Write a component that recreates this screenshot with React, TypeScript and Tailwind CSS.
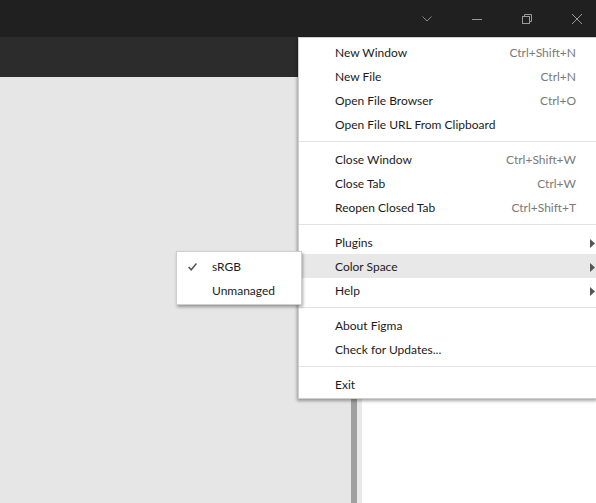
type Item = { label: string; shortcut?: string; sub?: boolean; active?: boolean }

const groups: Item[][] = [
    [
        { label: 'New Window', shortcut: 'Ctrl+Shift+N' },
        { label: 'New File', shortcut: 'Ctrl+N' },
        { label: 'Open File Browser', shortcut: 'Ctrl+O' },
        { label: 'Open File URL From Clipboard' },
    ],
    [
        { label: 'Close Window', shortcut: 'Ctrl+Shift+W' },
        { label: 'Close Tab', shortcut: 'Ctrl+W' },
        { label: 'Reopen Closed Tab', shortcut: 'Ctrl+Shift+T' },
    ],
    [
        { label: 'Plugins', sub: true },
        { label: 'Color Space', sub: true, active: true },
        { label: 'Help', sub: true },
    ],
    [
        { label: 'About Figma' },
        { label: 'Check for Updates...' },
    ],
    [{ label: 'Exit' }],
]

function Arrow() {
    return (
        <svg width="5" height="9" viewBox="0 0 5 9">
            <path d="M0 0 L5 4.5 L0 9 Z" fill="#555" />
        </svg>
    )
}

function MenuRow({ item }: { item: Item }) {
    return (
        <div className={`flex h-[24px] items-center pl-[36px] pr-[2px] pt-[2px] ${item.active ? 'bg-[#e8e8e8]' : ''}`}>
            <span className="flex-1 text-[#1b1b1b]">{item.label}</span>
            {item.shortcut && <span className="text-[#7a7a7a]">{item.shortcut}</span>}
            <span className="flex w-[19px] justify-end">{item.sub && <Arrow />}</span>
        </div>
    )
}

export default function App() {
    return (
        <div className="relative h-[503px] w-[596px] overflow-hidden bg-[#e6e6e6] font-['Lato',sans-serif] text-[12px]">
            {/* title bar */}
            <div className="flex h-[37px] items-center justify-end bg-[#202020] pr-[14px]">
                <div className="flex items-center gap-[40px]">
                    <svg width="10" height="6" viewBox="0 0 10 6">
                        <path d="M0.5 0.5 L5 5 L9.5 0.5" stroke="#8a8a8a" strokeWidth="1" fill="none" />
                    </svg>
                    <svg width="10" height="10" viewBox="0 0 10 10">
                        <path d="M0 5.5 H10" stroke="#9a9a9a" strokeWidth="1" />
                    </svg>
                    <svg width="10" height="10" viewBox="0 0 10 10">
                        <rect x="0.5" y="2.5" width="7" height="7" stroke="#9a9a9a" fill="none" />
                        <path d="M2.5 2.5 V0.5 H9.5 V7.5 H7.5" stroke="#9a9a9a" fill="none" />
                    </svg>
                    <svg width="10" height="10" viewBox="0 0 10 10">
                        <path d="M0 0 L10 10 M10 0 L0 10" stroke="#9a9a9a" strokeWidth="1" />
                    </svg>
                </div>
            </div>
            {/* toolbar */}
            <div className="h-[40px] bg-[#2c2c2c]" />
            {/* workspace */}
            <div className="flex h-[426px]">
                <div className="w-[351px] bg-[#e6e6e6]" />
                <div className="w-[6px] bg-[#a0a0a0]" />
                <div className="w-[5px] bg-[#e9e9e9]" />
                <div className="flex-1 bg-white" />
            </div>

            {/* main menu */}
            <div className="absolute left-[298px] top-[37px] w-[300px] border border-[#cfcfcf] bg-white py-[2px] shadow-[-1px_2px_3px_rgba(0,0,0,0.35)]">
                {groups.map((g, i) => (
                    <div key={i}>
                        {i > 0 && <div className="my-[5px] h-px bg-[#e3e3e3]" />}
                        {g.map((item) => (
                            <MenuRow key={item.label} item={item} />
                        ))}
                    </div>
                ))}
            </div>

            {/* color space submenu */}
            <div className="absolute left-[176px] top-[251px] w-[126px] border border-[#cfcfcf] bg-white py-[2px] shadow-[1px_2px_3px_rgba(0,0,0,0.35)]">
                <div className="flex h-[24px] items-center pt-[2px]">
                    <span className="flex w-[35px] pl-[11px]">
                        <svg width="9" height="8" viewBox="0 0 9 8">
                            <path d="M0.6 4 L3.2 6.8 L8.4 0.6" stroke="#555" strokeWidth="1.5" fill="none" />
                        </svg>
                    </span>
                    <span className="text-[#1b1b1b]">sRGB</span>
                </div>
                <div className="flex h-[24px] items-center pl-[35px] pt-[2px]">
                    <span className="text-[#1b1b1b]">Unmanaged</span>
                </div>
            </div>
        </div>
    )
}
